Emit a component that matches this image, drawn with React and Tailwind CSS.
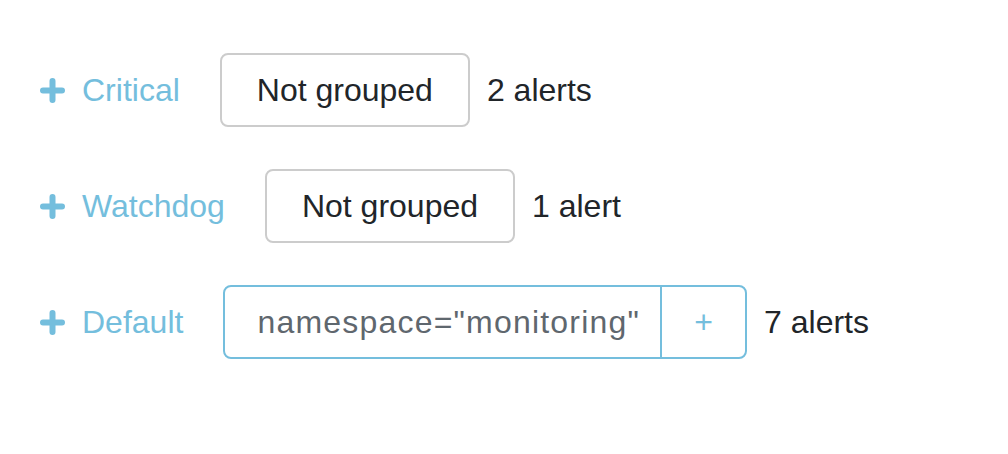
import React from "react";

const rows = [
  { name: "Critical", label: "Not grouped", count: "2 alerts" },
  { name: "Watchdog", label: "Not grouped", count: "1 alert" },
  { name: "Default", filter: 'namespace="monitoring"', count: "7 alerts" },
];

function PlusIcon() {
  return (
    <svg width="25" height="25" viewBox="0 0 25 25" className="shrink-0">
      <path d="M12.5 3v19M3 12.5h19" stroke="#74bedd" strokeWidth="6" strokeLinecap="round" />
    </svg>
  );
}

export default function App() {
  return (
    <div className="w-[1008px] h-[454px] bg-white overflow-hidden font-['Liberation_Sans',Arial,sans-serif] text-[32px] text-[#212529]">
      <div className="h-[3px] overflow-hidden">
        <div className="-mt-[42px] pl-[137px] text-[40px] text-[#c4c4c4] leading-[40px]">(alerts grid)</div>
      </div>
      <div className="flex flex-col gap-[42px] pt-[50px] pl-[40px]">
        {rows.map((r) => (
          <div key={r.name} className="flex items-center h-[74px]">
            <div className="flex items-center gap-[17px] text-[#74bedd]">
              <PlusIcon />
              <span className="leading-none">{r.name}</span>
            </div>
            {r.filter ? (
              <div className="ml-[40px] flex h-[74px] border-2 border-[#74bedd] rounded-[8px] overflow-hidden">
                <div className="flex items-center pl-[32px] pr-[20px] tracking-[1.2px] text-[#5f676e]">{r.filter}</div>
                <div className="flex items-center justify-center w-[85px] border-l-2 border-[#74bedd] text-[#74bedd]">+</div>
              </div>
            ) : (
              <div className="ml-[40px] flex items-center h-[74px] px-[35px] border-2 border-[#cccccc] rounded-[8px]">
                {r.label}
              </div>
            )}
            <span className="ml-[17px]">{r.count}</span>
          </div>
        ))}
      </div>
    </div>
  );
}
